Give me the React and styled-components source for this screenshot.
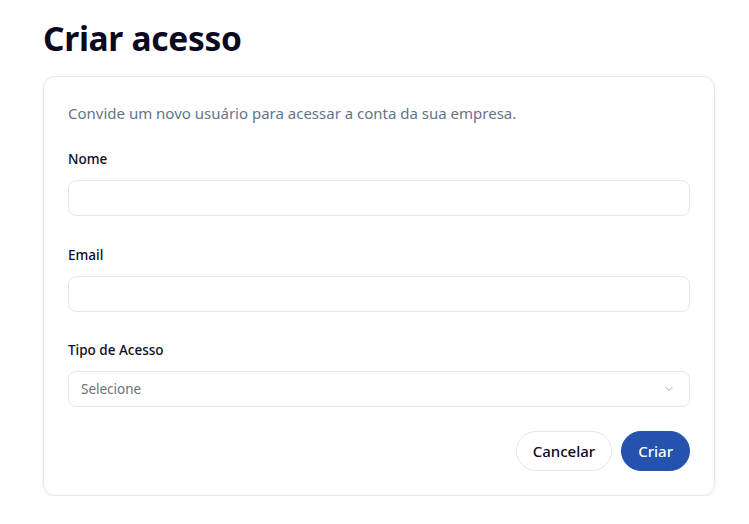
import styled, { createGlobalStyle } from "styled-components";

const GlobalStyle = createGlobalStyle`
  * { box-sizing: border-box; }
  body {
    margin: 0;
    background: #ffffff;
    font-family: "Noto Sans", "Open Sans", sans-serif;
    color: #0b0b1e;
  }
`;

const Page = styled.div`
  padding: 15px 34px 0 43px;
`;

const Title = styled.h1`
  margin: 0 0 15px;
  font-size: 33.5px;
  line-height: 46px;
  font-weight: 700;
  color: #0a0a1f;
  letter-spacing: -0.3px;
`;

const Card = styled.div`
  border: 1px solid #e3e7ef;
  border-radius: 12px;
  box-shadow: 0 1px 3px rgba(15, 23, 42, 0.08);
  padding: 24px;
  display: flex;
  flex-direction: column;
`;

const Description = styled.p`
  margin: 0 0 24px;
  font-size: 15px;
  line-height: 24px;
  color: #64748b;
`;

const Field = styled.div`
  display: flex;
  flex-direction: column;
  margin-bottom: ${(p) => p.$gap || 28.5}px;
`;

const Label = styled.label`
  font-size: 13.5px;
  line-height: 20px;
  font-weight: 500;
  color: #0b0b1e;
  margin-bottom: 11px;
`;

const Input = styled.input`
  height: 36px;
  border: 1px solid #e2e6ee;
  border-radius: 8px;
  padding: 0 12px;
  font-family: inherit;
  font-size: 14px;
  outline: none;
  background: #fff;
`;

const Select = styled.div`
  height: 36px;
  border: 1px solid #e2e6ee;
  border-radius: 8px;
  padding: 0 14px 0 12px;
  display: flex;
  align-items: center;
  justify-content: space-between;
  font-size: 13.5px;
  color: #6b7280;
`;

const Actions = styled.div`
  display: flex;
  justify-content: flex-end;
  gap: 9px;
`;

const Button = styled.button`
  height: 40px;
  padding: 0 16px;
  border-radius: 999px;
  font-family: inherit;
  font-size: 15px;
  font-weight: 500;
  cursor: pointer;
  border: 1px solid ${(p) => (p.$primary ? "#2452ad" : "#e2e6ee")};
  background: ${(p) => (p.$primary ? "#2452ad" : "#ffffff")};
  color: ${(p) => (p.$primary ? "#ffffff" : "#0b0b1e")};
`;

const Chevron = () => (
  <svg width="12" height="12" viewBox="0 0 24 24" fill="none" stroke="#9ca3af" strokeWidth="2" strokeLinecap="round" strokeLinejoin="round">
    <path d="m6 9 6 6 6-6" />
  </svg>
);

export default function App() {
  return (
    <Page>
      <GlobalStyle />
      <Title>Criar acesso</Title>
      <Card>
        <Description>Convide um novo usuário para acessar a conta da sua empresa.</Description>
        <Field>
          <Label>Nome</Label>
          <Input type="text" />
        </Field>
        <Field>
          <Label>Email</Label>
          <Input type="email" />
        </Field>
        <Field $gap={24}>
          <Label>Tipo de Acesso</Label>
          <Select>
            <span>Selecione</span>
            <Chevron />
          </Select>
        </Field>
        <Actions>
          <Button type="button">Cancelar</Button>
          <Button type="button" $primary>Criar</Button>
        </Actions>
      </Card>
    </Page>
  );
}
